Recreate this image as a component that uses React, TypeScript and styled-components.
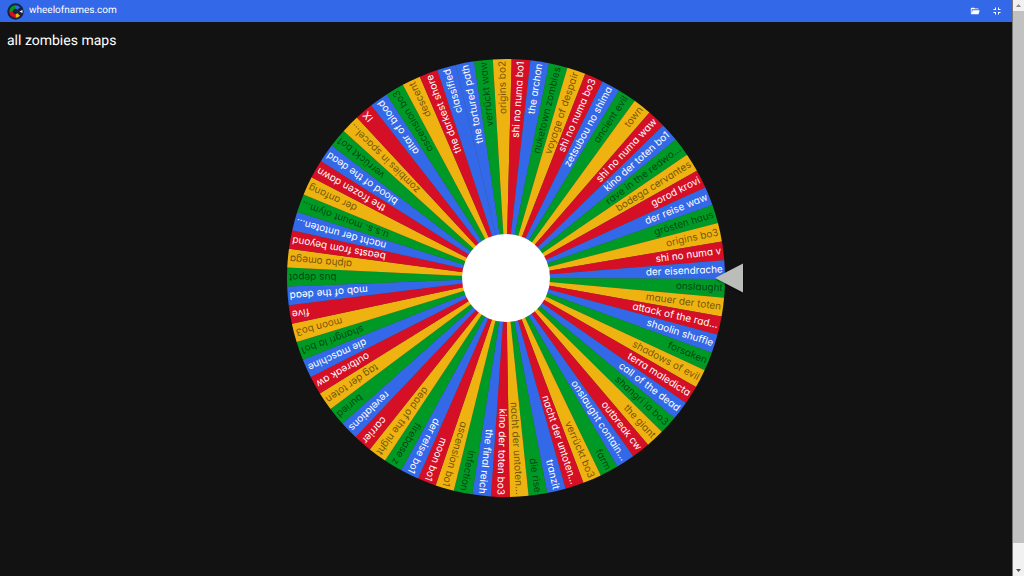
import React from "react";
import styled, { createGlobalStyle } from "styled-components";

const GlobalStyle = createGlobalStyle`
  * { box-sizing: border-box; }
  body {
    margin: 0;
    background: #121212;
    color: #fff;
    font-family: Roboto, "Open Sans", sans-serif;
    text-rendering: geometricPrecision;
    overflow: hidden;
  }
`;

const Shell = styled.div`
  display: flex;
  min-height: 100vh;
`;

const Page = styled.div`
  flex: 1;
  min-width: 0;
  display: flex;
  flex-direction: column;
`;

const Toolbar = styled.header`
  display: flex;
  align-items: center;
  justify-content: space-between;
  height: 22px;
  padding: 0 9px 0 7px;
  background: #3369e8;
`;

const Brand = styled.a`
  display: flex;
  align-items: center;
  gap: 5px;
  color: #fff;
  font-size: 10px;
  font-weight: 400;
  line-height: 22px;
  text-decoration: none;
`;

const Actions = styled.nav`
  display: flex;
  align-items: center;
  gap: 11px;
`;

const IconButton = styled.button`
  display: flex;
  padding: 0;
  border: 0;
  background: none;
  color: #fff;
  cursor: pointer;
`;

const Title = styled.h1`
  margin: 0;
  padding: 8px 7px 0;
  font-size: 14px;
  font-weight: 400;
  line-height: 22px;
`;

const Stage = styled.main`
  display: flex;
  justify-content: center;
  padding: 6px 0;
`;

const WheelSvg = styled.svg`
  width: 480px;
  max-width: 100%;
  height: auto;
  cursor: pointer;
`;

const Label = styled.text<{ $light: boolean }>`
  font-family: Inter, Lato, sans-serif;
  font-size: 10px;
  font-weight: 400;
  font-feature-settings: "cv11" 1;
  text-anchor: end;
  fill: ${(p) => (p.$light ? "#fff" : "rgba(0, 0, 0, 0.55)")};
`;

const Scrollbar = styled.div`
  display: flex;
  flex-direction: column;
  align-items: center;
  width: 12px;
  border-left: 1px solid #777;
  background: #f1f1f1;
`;

const ScrollArrow = styled.svg`
  width: 11px;
  height: 11px;
  flex: none;
`;

const ScrollTrack = styled.div`
  flex: 1;
  align-self: stretch;
  display: flex;
  flex-direction: column;
`;

const ScrollThumb = styled.div`
  flex: 0 0 96%;
  background: #c1c1c1;
`;

const COLORS = ["#3369e8", "#009925", "#eeb211", "#d50f25"];

const ENTRIES = [
  "the tortured path", "verrückt waw", "origins bo2", "shi no numa bo1", "the archon",
  "nuketown zombies", "voyage of despair", "shi no numa bo3", "zetsubou no shima",
  "ancient evil", "town", "shi no numa waw", "kino der toten bo1", "rave in the redwo…",
  "bodega cervantes", "gorod krovi", "der reise waw", "grösten haus", "origins bo3",
  "shi no numa v", "der eisendrache", "onslaught", "mauer der toten", "attack of the rad…",
  "shaolin shuffle", "forsaken", "shadows of evil", "terra maledicta", "call of the dead",
  "shangri la bo3", "the giant", "outbreak cw", "onslaught contain…", "farm",
  "verrückt bo3", "nacht der untoten…", "tranzit", "die rise", "nacht der untoten…",
  "kino der toten bo3", "the final reich", "infection", "ascension bo1", "moon bo1",
  "der reise bo1", "firebase z", "dead of the night", "carrier", "revelations", "buried",
  "tag der toten", "outbreak aw", "die maschine", "shangri la bo1", "moon bo3", "five",
  "mob of the dead", "bus depot", "alpha omega", "beasts from beyond",
  "nacht der untoten…", "u.s.s. mount olym…", "der anfang", "the frozen dawn",
  "blood of the dead", "verrückt bo1", "zombies in spacel…", "IX", "altar of blood",
  "ascension bo3", "descent", "the darkest shore", "classified",
];

const RADIUS = 219;
const STEP = 360 / ENTRIES.length;
// Index of the winning entry; its slice ends right at the pointer.
const WINNER = 20;
const START = 0.25 - (WINNER + 1) * STEP;

const point = (deg: number) => {
  const a = (deg * Math.PI) / 180;
  return `${(RADIUS * Math.cos(a)).toFixed(2)} ${(RADIUS * Math.sin(a)).toFixed(2)}`;
};

function Wheel() {
  return (
    <WheelSvg viewBox="-240 -220 480 440" role="img" aria-label="Wheel of names">
      <circle r={RADIUS - 1} fill="#4a4a30" />
      {ENTRIES.map((name, i) => {
        const from = START + i * STEP;
        return (
          <path
            key={`${name}-${i}`}
            d={`M0 0 L${point(from)} A${RADIUS} ${RADIUS} 0 0 1 ${point(from + STEP)} Z`}
            fill={COLORS[i % 4]}
          />
        );
      })}
      {ENTRIES.map((name, i) => (
        <Label
          key={`${name}-${i}`}
          $light={i % 4 === 0 || i % 4 === 3}
          x="217"
          y="3"
          transform={`rotate(${(START + (i + 0.5) * STEP).toFixed(3)})`}
        >
          {name}
        </Label>
      ))}
      <circle r="44" fill="#fff" />
      <path
        d="M209 0 L237 -14.500 V14.500 Z"
        fill="#bbbdbb"
        style={{ filter: "drop-shadow(0 1px 1px rgba(0,0,0,.5))" }}
      />
    </WheelSvg>
  );
}

function Logo() {
  return (
    <svg width="17" height="17" viewBox="0 0 34 34" aria-hidden="true">
      <circle cx="17" cy="17" r="16.500" fill="#15253f" />
      <g fill="none" strokeWidth="7">
        <path d="M8.200 18A8.800 8.800 0 0 1 16 8.200" stroke="#009925" />
        <path d="M16 8.200A8.800 8.800 0 0 1 23.500 11" stroke="#3369e8" />
        <path d="M8.200 18A8.800 8.800 0 0 0 18 25.800" stroke="#d50f25" />
        <path d="M17.500 25.800A8.800 8.800 0 0 0 23.500 23" stroke="#eeb211" />
      </g>
      <path d="M25 17L31 14V20Z" fill="#fff" />
    </svg>
  );
}

export default function App() {
  return (
    <>
      <GlobalStyle />
      <Shell>
        <Page>
          <Toolbar>
            <Brand href="#">
              <Logo />
              wheelofnames.com
            </Brand>
            <Actions>
              <IconButton aria-label="Open">
                <svg width="10" height="10" viewBox="0 0 24 24" fill="currentColor">
                  <path d="M19 20H4a2 2 0 0 1-2-2V6a2 2 0 0 1 2-2h6l2 2h7a2 2 0 0 1 2 2H4v10l2.140-8h17.070l-2.280 8.500c-.230.870-1.010 1.500-1.930 1.500z" />
                </svg>
              </IconButton>
              <IconButton aria-label="Exit fullscreen">
                <svg width="12" height="12" viewBox="0 0 24 24" fill="currentColor">
                  <path d="M14 14h5v2h-3v3h-2v-5M5 14h5v5H8v-3H5v-2m3-9h2v5H5V8h3V5m11 3v2h-5V5h2v3h3z" />
                </svg>
              </IconButton>
            </Actions>
          </Toolbar>
          <Title>all zombies maps</Title>
          <Stage>
            <Wheel />
          </Stage>
        </Page>
        <Scrollbar aria-hidden="true">
          <ScrollArrow viewBox="0 0 11 11">
            <path d="M3 7L5.500 4L8 7Z" fill="#8a8a8a" />
          </ScrollArrow>
          <ScrollTrack>
            <ScrollThumb />
          </ScrollTrack>
          <ScrollArrow viewBox="0 0 11 11">
            <path d="M3 4L5.500 7L8 4Z" fill="#505050" />
          </ScrollArrow>
        </Scrollbar>
      </Shell>
    </>
  );
}
